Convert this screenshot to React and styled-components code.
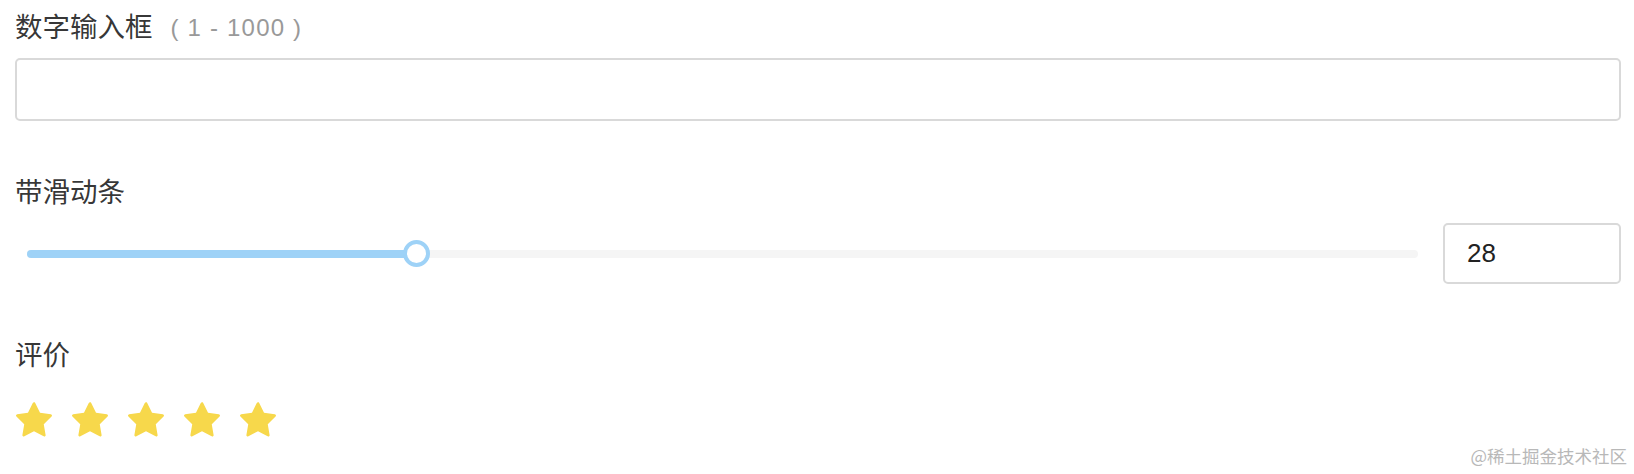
import React from 'react'
import styled, { createGlobalStyle } from 'styled-components'

const GlobalStyle = createGlobalStyle`
  html, body {
    margin: 0;
    padding: 0;
    background: #fff;
  }
  body {
    font-family: "Liberation Sans", "Noto Sans CJK SC", sans-serif;
    color: rgba(0, 0, 0, 0.85);
  }
`

const Page = styled.div`
  position: relative;
  box-sizing: border-box;
  width: 1634px;
  height: 474px;
  padding: 8px 13px 0 15px;
  overflow: hidden;
`

const Field = styled.div`
  display: flex;
  flex-direction: column;
  margin-bottom: 52px;
`

const Label = styled.label`
  display: flex;
  align-items: center;
  height: 40px;
  margin-bottom: 10px;
  font-size: 27.5px;
  line-height: 40px;
  color: rgba(0, 0, 0, 0.8);
`

const Hint = styled.span`
  margin-left: 18px;
  font-size: 24px;
  color: #999;
  letter-spacing: 1.2px;
`

const Box = styled.div`
  box-sizing: border-box;
  width: ${(p) => p.$width || '100%'};
  height: ${(p) => p.$height || 63}px;
  border: 2px solid #d9d9d9;
  border-radius: 5px;
  padding: 0 22px;
  display: flex;
  align-items: center;
  font-size: 26px;
  color: #222;
  flex-shrink: 0;
`

const SliderRow = styled.div`
  display: flex;
  align-items: center;
  gap: 25px;
`

const SliderWrap = styled.div`
  flex: 1;
  padding: 0 0 0 12px;
`

const Track = styled.div`
  position: relative;
  height: 8px;
  border-radius: 4px;
  background: #f5f5f5;
`

const Fill = styled.div`
  height: 100%;
  border-radius: 4px;
  background: #9ed2f7;
`

const Handle = styled.div`
  position: absolute;
  top: 50%;
  box-sizing: border-box;
  width: 27px;
  height: 27px;
  margin: -13.5px 0 0 -13.5px;
  border: 4px solid #9ed2f7;
  border-radius: 50%;
  background: #fff;
`

const Stars = styled.div`
  display: flex;
  gap: 18px;
  margin-top: 16px;
`

const Star = styled.svg`
  width: 38px;
  height: 38px;
  fill: ${(p) => (p.$on ? '#f7d84b' : '#e8e8e8')};
`

const Watermark = styled.div`
  position: absolute;
  right: 7px;
  bottom: 6px;
  font-size: 17.5px;
  color: #b8b8b8;
  font-family: "Noto Sans CJK SC", sans-serif;
`

const starPath =
  'M908.1 353.1l-253.9-36.9L540.7 86.1c-3.1-6.3-8.2-11.4-14.5-14.5-15.8-7.8-35-1.3-42.9 14.5L369.8 316.2l-253.9 36.9c-7 1-13.4 4.3-18.3 9.3a32.05 32.05 0 00.6 45.3l183.7 179.1-43.4 252.9a31.95 31.95 0 0046.4 33.7L512 754l227.1 119.4c6.2 3.3 13.4 4.4 20.3 3.2 17.4-3 29.1-19.5 26.1-36.9l-43.4-252.9 183.7-179.1c5-4.9 8.3-11.3 9.3-18.3 2.7-17.5-9.5-33.7-27-36.3z'

function Slider({ value, max }) {
  const pct = (value / max) * 100
  return (
    <SliderWrap>
      <Track>
        <Fill style={{ width: `${pct}%` }} />
        <Handle style={{ left: `${pct}%` }} />
      </Track>
    </SliderWrap>
  )
}

function Rate({ count, value }) {
  return (
    <Stars>
      {Array.from({ length: count }, (_, i) => (
        <Star key={i} viewBox="64 64 896 896" $on={i < value}>
          <path d={starPath} />
        </Star>
      ))}
    </Stars>
  )
}

export default function App() {
  return (
    <Page>
      <GlobalStyle />
      <Field>
        <Label>
          数字输入框<Hint>( 1 - 1000 )</Hint>
        </Label>
        <Box />
      </Field>
      <Field>
        <Label>带滑动条</Label>
        <SliderRow>
          <Slider value={28} max={100} />
          <Box $width="178px" $height={61}>28</Box>
        </SliderRow>
      </Field>
      <Field>
        <Label>评价</Label>
        <Rate count={5} value={5} />
      </Field>
      <Watermark>@稀土掘金技术社区</Watermark>
    </Page>
  )
}
